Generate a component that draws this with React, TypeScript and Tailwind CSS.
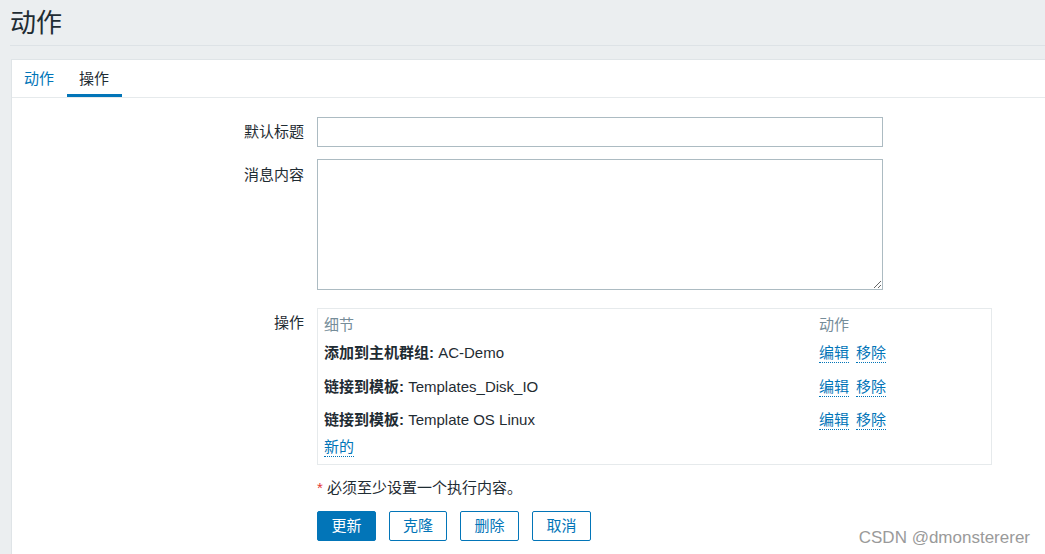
import React from "react";

const FONT = { fontFamily: '"Liberation Sans", "Noto Sans CJK SC", Arial, sans-serif' };

function Lnk({ children }: { children: React.ReactNode }) {
  return (
    <span className="text-[#0275b8] border-b border-dotted border-[#0275b8] leading-[18px] cursor-pointer">
      {children}
    </span>
  );
}

const rows = [
  { h: "h-[32px]", label: "添加到主机群组:", value: "AC-Demo" },
  { h: "h-[36px]", label: "链接到模板:", value: "Templates_Disk_IO" },
  { h: "h-[30px]", label: "链接到模板:", value: "Template OS Linux" },
];

export default function App() {
  return (
    <div
      className="relative w-[1045px] h-[554px] overflow-hidden bg-[#ebeef0] text-[15px] text-[#1f2c33]"
      style={FONT}
    >
      {/* Header */}
      <div className="ml-[10px] pt-[8px] pb-[7px] border-b border-[#dde2e6]">
        <h1 className="text-[26px] leading-[30px] font-normal">动作</h1>
      </div>

      {/* Panel */}
      <div className="mt-[13px] ml-[11px] h-[600px] bg-white border-l border-t border-[#dfe4e7]">
        {/* Tabs */}
        <div className="flex h-[38px] border-b border-[#e6eaec]">
          <div className="w-[55px] pl-[12px] h-[37px] flex items-center text-[#0275b8] leading-[20px] pt-[1px]">动作</div>
          <div className="w-[55px] pl-[12px] h-[37px] flex items-center border-b-[3px] border-[#0275b8] pt-[4px]">操作</div>
        </div>

        {/* Form */}
        <div className="pt-[19px] grid grid-cols-[292px_675px] gap-x-[13px]">
          {/* Row 1 */}
          <div className="text-right leading-[30px]">默认标题</div>
          <input className="h-[30px] w-[566px] border border-[#acbbc2] px-[6px] outline-none" />

          {/* Row 2 */}
          <div className="text-right pt-[6px] leading-[20px] mt-[12px]">消息内容</div>
          <textarea className="mt-[12px] h-[131px] w-[566px] border border-[#acbbc2] px-[6px] outline-none" />

          {/* Row 3 */}
          <div className="text-right mt-[18px] pt-[5px] leading-[20px]">操作</div>
          <div className="mt-[18px] h-[157px] border border-[#e6eaec] px-[6px] pt-[4px]">
            <div className="flex h-[24px] items-center text-[#768d99]">
              <div className="w-[495px]">细节</div>
              <div>动作</div>
            </div>
            {rows.map((r, i) => (
              <div key={i} className={`flex ${r.h} items-center`}>
                <div className="w-[495px]">
                  <span className="font-bold">{r.label}</span> {r.value}
                </div>
                <div className="flex gap-[7px]">
                  <Lnk>编辑</Lnk>
                  <Lnk>移除</Lnk>
                </div>
              </div>
            ))}
            <div className="flex h-[24px] items-center">
              <Lnk>新的</Lnk>
            </div>
          </div>

          {/* Note */}
          <div />
          <div className="mt-[13px] leading-[20px]">
            <span className="text-[#e33734]">*</span> 必须至少设置一个执行内容。
          </div>

          {/* Buttons */}
          <div />
          <div className="mt-[13px] flex gap-[13px]">
            <button className="w-[59px] h-[30px] rounded-[2px] bg-[#0275b8] text-white border border-[#0275b8]">更新</button>
            <button className="w-[58px] h-[30px] rounded-[2px] bg-white text-[#0275b8] border border-[#0275b8]">克隆</button>
            <button className="w-[59px] h-[30px] rounded-[2px] bg-white text-[#0275b8] border border-[#0275b8]">删除</button>
            <button className="w-[59px] h-[30px] rounded-[2px] bg-white text-[#0275b8] border border-[#0275b8]">取消</button>
          </div>
        </div>
      </div>

      {/* Watermark */}
      <div className="absolute right-[15px] top-[528px] text-[17px] leading-[20px] text-[#9a9a9a]">
        CSDN @dmonstererer
      </div>
    </div>
  );
}
